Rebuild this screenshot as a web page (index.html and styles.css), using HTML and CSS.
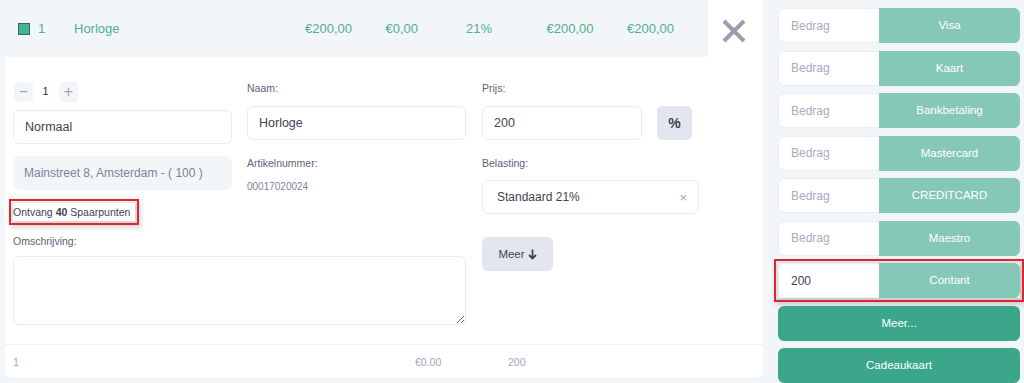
FILE: index.html
```html
<!DOCTYPE html>
<html>
<head>
	<title>Kassa</title>
	<link rel="stylesheet" href="styles.css">
</head>
<body>
	<div class="kassa">
		<div class="order-card">
			<div class="order-top">
				<div class="order-line">
					<span class="line-check"></span>
					<span class="cell cell-qty">1</span>
					<span class="cell cell-name">Horloge</span>
					<span class="cell cell-num">€200,00</span>
					<span class="cell cell-num">€0,00</span>
					<span class="cell cell-num">21%</span>
					<span class="cell cell-num">€200,00</span>
					<span class="cell cell-num">€200,00</span>
				</div>
				<div class="line-close">
					<svg width="24" height="24" viewBox="0 0 24 24">
						<path d="M2 2 L22 22 M22 2 L2 22" stroke="#9b9cae" stroke-width="4" stroke-linecap="butt" fill="none"/>
					</svg>
				</div>
			</div>

			<div class="line-form">
				<div class="form-col col-a">
					<div class="stepper">
						<span class="step-btn">&minus;</span>
						<span class="step-val">1</span>
						<span class="step-btn">+</span>
					</div>
					<input type="text" class="field mb12" value="Normaal"/>
					<div class="field field-muted">Mainstreet 8, Amsterdam - ( 100 )</div>
				</div>

				<div class="form-col col-b">
					<label class="form-label">Naam:</label>
					<input type="text" class="field" value="Horloge"/>
					<label class="form-label mt16">Artikelnummer:</label>
					<div class="sku">00017020024</div>
				</div>

				<div class="form-col col-c">
					<label class="form-label">Prijs:</label>
					<div class="price-row">
						<input type="text" class="field price-input" value="200"/>
						<span class="pct-btn">%</span>
					</div>
					<label class="form-label mt16">Belasting:</label>
					<div class="field tax-select">
						<span>Standaard 21%</span>
						<span class="tax-clear">&times;</span>
					</div>
					<span class="more-btn">Meer
						<svg width="9" height="11" viewBox="0 0 9 11"><path d="M4.5 0.5 V9.5 M1 6 L4.5 9.5 L8 6" stroke="#3f4254" stroke-width="1.8" fill="none"/></svg>
					</span>
				</div>

				<div class="form-col col-d">
					<div class="points"><span class="mark">Ontvang <b>40</b> Spaarpunten</span></div>
					<label class="form-label desc-label">Omschrijving:</label>
					<textarea class="desc"></textarea>
				</div>
			</div>

			<div class="order-foot">
				<span class="foot-qty">1</span>
				<span class="foot-disc">€0.00</span>
				<span class="foot-total">200</span>
			</div>
		</div>

		<div class="pay-col">
			<div class="pay-row"><input type="text" class="pay-input" placeholder="Bedrag"/><span class="pay-btn">Visa</span></div>
			<div class="pay-row"><input type="text" class="pay-input" placeholder="Bedrag"/><span class="pay-btn">Kaart</span></div>
			<div class="pay-row"><input type="text" class="pay-input" placeholder="Bedrag"/><span class="pay-btn">Bankbetaling</span></div>
			<div class="pay-row"><input type="text" class="pay-input" placeholder="Bedrag"/><span class="pay-btn">Mastercard</span></div>
			<div class="pay-row"><input type="text" class="pay-input" placeholder="Bedrag"/><span class="pay-btn">CREDITCARD</span></div>
			<div class="pay-row"><input type="text" class="pay-input" placeholder="Bedrag"/><span class="pay-btn">Maestro</span></div>
			<div class="pay-row mark"><input type="text" class="pay-input" value="200"/><span class="pay-btn">Contant</span></div>
			<div class="pay-wide">Meer...</div>
			<div class="pay-wide">Cadeaukaart</div>
		</div>
	</div>
</body>
</html>
```

FILE: styles.css
```css
body{
	margin: 0;
	background-color: #f3f6f9;
	font-family: "Liberation Sans", Arial, sans-serif;
	color: #3f4254;
}
input, textarea{
	font-family: "Liberation Sans", Arial, sans-serif;
}
.kassa{
	display: flex;
	gap: 15px;
	padding-left: 5px;
	height: 383px;
}
.order-card{
	width: 758px;
	height: 378px;
	background-color: #fff;
	border-radius: 0 0 6px 6px;
	display: flex;
	flex-direction: column;
}
.order-top{
	display: flex;
	height: 57px;
}
.order-line{
	width: 703px;
	display: flex;
	align-items: center;
	padding-left: 13px;
	box-sizing: border-box;
	background-color: #f3f6f9;
	color: #4fb08f;
	font-size: 13px;
}
.line-check{
	width: 10px;
	height: 10px;
	background-color: #47b491;
	border: 1px solid #3d6a5e;
	margin-right: 8px;
	margin-top: 1px;
}
.cell-qty{
	width: 36px;
}
.cell-name{
	width: 231px;
}
.cell-num{
	width: 80.5px;
}
.line-close{
	flex: 1;
	display: flex;
	justify-content: center;
	padding-top: 19px;
	padding-right: 4px;
}
.line-form{
	display: grid;
	grid-template-columns: 219px 219px 218px;
	grid-template-areas: "a b c" "d d c";
	column-gap: 15px;
	padding: 23px 0 0 8px;
	align-items: start;
}
.col-a{ grid-area: a; }
.col-b{ grid-area: b; }
.col-c{ grid-area: c; padding-left: 1px; }
.col-d{ grid-area: d; }
.stepper{
	display: flex;
	align-items: center;
	height: 21px;
	margin-bottom: 8px;
	padding-top: 1px;
}
.step-btn{
	width: 19px;
	height: 20px;
	background-color: #f3f6f9;
	border-radius: 4px;
	color: #a1a5b7;
	font-size: 16px;
	line-height: 20px;
	text-align: center;
	margin-left: 1px;
}
.step-val{
	width: 25px;
	text-align: center;
	font-size: 10px;
	color: #181c32;
}
.field{
	display: flex;
	align-items: center;
	width: 100%;
	height: 34px;
	box-sizing: border-box;
	border: 1px solid #e9ebf1;
	border-radius: 6px;
	background-color: #fff;
	padding: 0 11px;
	font-size: 12.5px;
	color: #3f4254;
	outline: none;
}
.mb12{
	margin-bottom: 12px;
}
.field-muted{
	background-color: #f3f6f9;
	border-color: #f3f6f9;
	color: #7e8299;
	font-size: 12px;
	padding-left: 10px;
}
.form-label{
	display: block;
	font-size: 10.5px;
	line-height: 14px;
	color: #5e6278;
	margin-top: 1px;
	margin-bottom: 11px;
}
.mt16{
	margin-top: 16px;
	margin-bottom: 10px;
}
.sku{
	font-size: 10px;
	line-height: 14px;
	color: #7e8299;
}
.price-row{
	display: flex;
	align-items: center;
	gap: 15px;
}
.price-input{
	width: 160px;
}
.pct-btn{
	width: 35px;
	height: 34px;
	margin-top: -1px;
	border-radius: 5px;
	background-color: #e4e6ef;
	color: #3f4254;
	font-size: 14px;
	font-weight: bold;
	line-height: 34px;
	text-align: center;
}
.tax-select{
	justify-content: space-between;
	padding: 0 11px 0 14px;
	font-size: 12px;
}
.tax-clear{
	color: #a1a5b7;
	font-size: 13px;
}
.more-btn{
	display: flex;
	align-items: center;
	justify-content: center;
	gap: 3px;
	margin-top: 23px;
	width: 71px;
	height: 34px;
	border-radius: 5px;
	background-color: #e4e6ef;
	color: #3f4254;
	font-size: 11.5px;
}
.points{
	margin-top: 9px;
	font-size: 10.5px;
	line-height: 18px;
	color: #3f4254;
}
.mark{
	outline: 2px solid #e0262d;
	outline-offset: 2px;
	box-shadow: 2px 3px 5px 4px rgba(0,0,0,0.16);
}
.points .mark{
	display: inline-block;
	padding-right: 5px;
}
.desc-label{
	margin-top: 13px;
	margin-bottom: 8px;
}
.desc{
	display: block;
	width: 453px;
	height: 69px;
	box-sizing: border-box;
	border: 1px solid #e9ebf1;
	border-radius: 6px;
	margin: 0;
	outline: none;
}
.order-foot{
	margin-top: auto;
	height: 33px;
	border-top: 1px solid #eef0f5;
	display: flex;
	align-items: center;
	padding-left: 8px;
	font-size: 10.5px;
	color: #a1a5b7;
}
.foot-qty{
	width: 402px;
}
.foot-disc{
	width: 93px;
}
.pay-col{
	width: 242px;
	display: flex;
	flex-direction: column;
	gap: 7.5px;
	padding-top: 8px;
}
.pay-row{
	display: flex;
	height: 35px;
}
.pay-input{
	width: 101px;
	box-sizing: border-box;
	border: 1px solid #eceef3;
	border-right: none;
	border-radius: 6px 0 0 6px;
	padding: 0 0 0 12px;
	font-size: 12px;
	color: #3f4254;
	outline: none;
}
.pay-input::placeholder{
	color: #a8abbd;
}
.pay-btn{
	flex: 1;
	background-color: #86c8b8;
	border-radius: 0 6px 6px 0;
	color: #fff;
	font-size: 11.5px;
	line-height: 35px;
	text-align: center;
}
.pay-wide{
	height: 35px;
	line-height: 35px;
	border-radius: 6px;
	background-color: #3ba68a;
	color: #fff;
	font-size: 11.5px;
	text-align: center;
}
```
